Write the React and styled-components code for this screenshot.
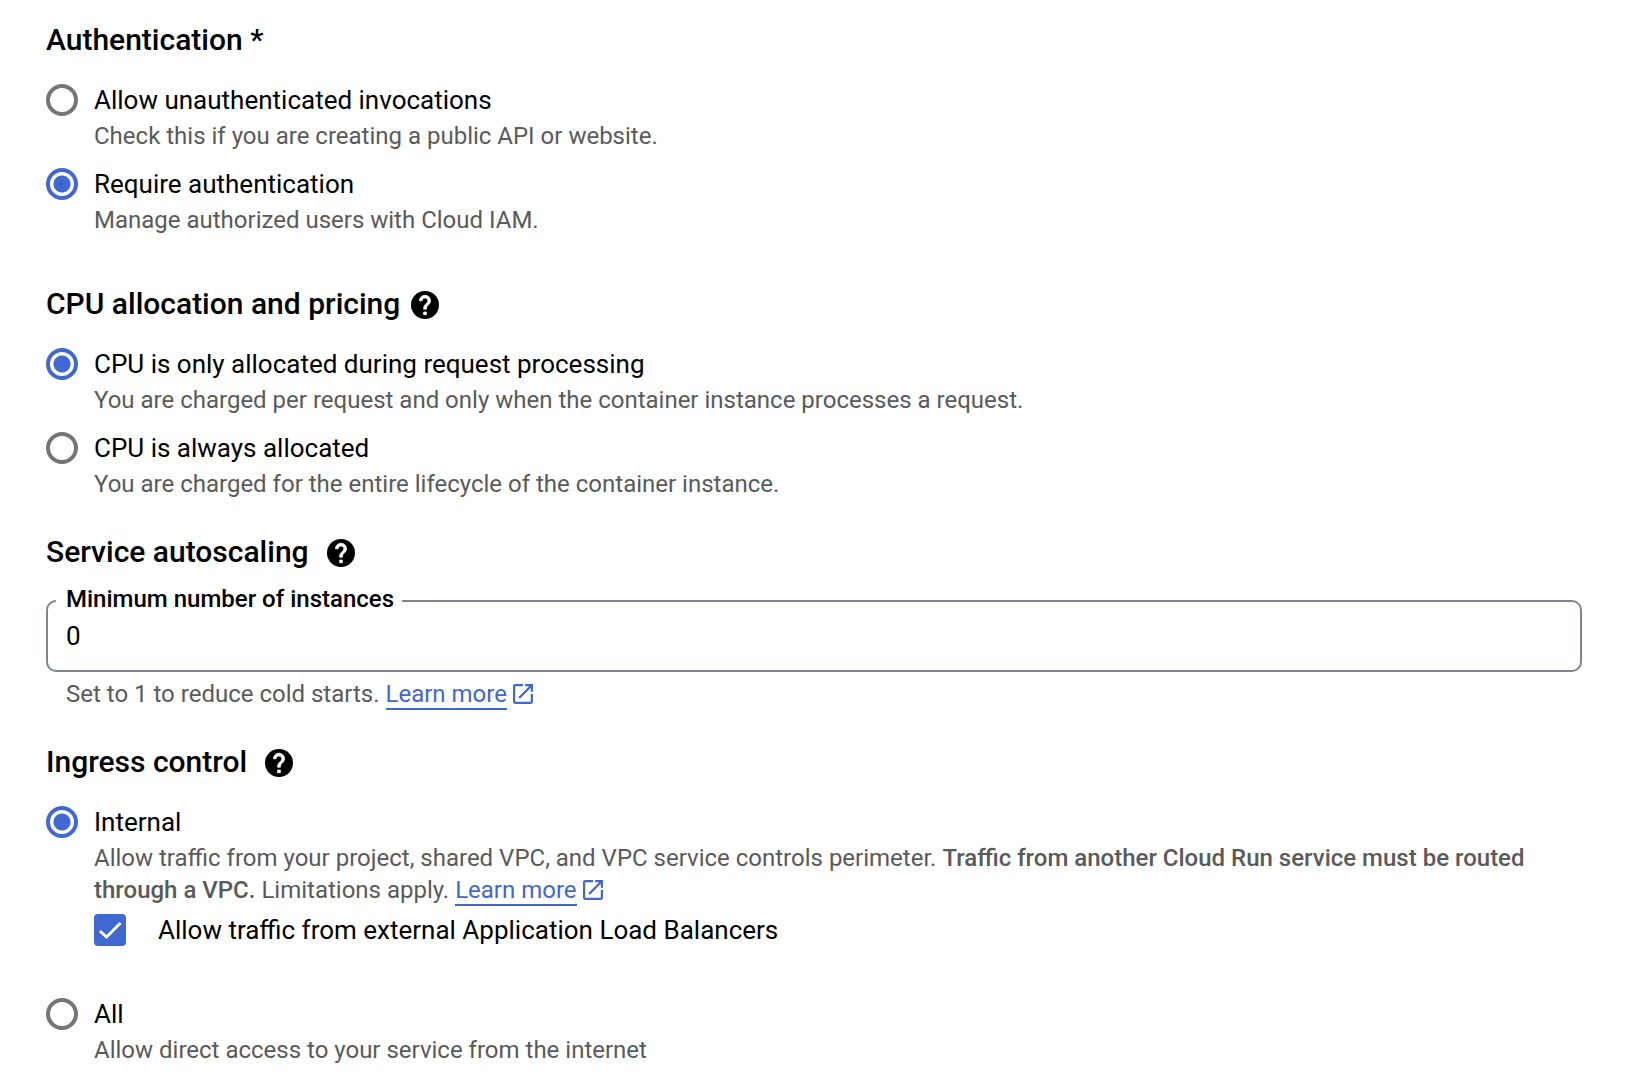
import React, { useState } from "react";
import styled, { createGlobalStyle } from "styled-components";

const blue = "#4167d2";
const ink = "#000000";
const muted = "#5a5a5a";
const outline = "#80868b";

const GlobalStyle = createGlobalStyle`
  *, *::before, *::after { box-sizing: border-box; }
  body {
    margin: 0;
    background: #ffffff;
    color: ${ink};
    font-family: Roboto, "Liberation Sans", sans-serif;
    font-size: 24px;
    line-height: 32px;
  }
`;

const Form = styled.form`
  display: flex;
  flex-direction: column;
  padding: 20px 68px 20px 46px;
`;

const Section = styled.section`
  display: flex;
  flex-direction: column;
  gap: ${(p) => p.$gap || 24}px;
  margin-bottom: ${(p) => p.$after || 0}px;
`;

const HeadingRow = styled.div`
  display: flex;
  align-items: center;
  gap: ${(p) => p.$gap || 18}px;
`;

const Heading = styled.h2`
  margin: 0;
  font-size: 30px;
  font-weight: 500;
  line-height: 40px;
`;

const HelpButton = styled.button`
  display: flex;
  padding: 2px 0 0;
  border: 0;
  background: none;
  color: ${ink};
  cursor: pointer;
`;

const Options = styled.div`
  display: flex;
  flex-direction: column;
  gap: ${(p) => p.$gap || 16}px;
`;

const Option = styled.div`
  display: grid;
  grid-template-columns: 32px 1fr;
  column-gap: 16px;
  row-gap: 4px;
`;

const Radio = styled.input`
  appearance: none;
  width: 32px;
  height: 32px;
  margin: 0;
  border: 4px solid #757575;
  border-radius: 50%;
  background: #ffffff;
  cursor: pointer;

  &:checked {
    border-color: ${blue};
    background: radial-gradient(circle, ${blue} 8px, #ffffff 9px);
  }
`;

const OptionLabel = styled.label`
  font-size: 26px;
  cursor: pointer;
`;

const Description = styled.p`
  grid-column: 2;
  margin: 0;
  color: ${muted};

  strong { font-weight: 500; }
`;

const Nested = styled.div`
  grid-column: 2;
  display: flex;
  align-items: center;
  gap: 32px;
  padding-top: 4px;
`;

const Tick = styled.span`
  display: grid;
  flex: none;

  input, svg { grid-area: 1 / 1; }
  svg { pointer-events: none; }
`;

const Checkbox = styled.input`
  appearance: none;
  width: 32px;
  height: 32px;
  margin: 0;
  border: 4px solid #757575;
  border-radius: 4px;
  cursor: pointer;

  &:checked {
    border-color: ${blue};
    background: ${blue};
  }
`;

const Field = styled.fieldset`
  margin: 0;
  padding: 0 8px;
  min-width: 0;
  border: 2px solid ${outline};
  border-radius: 10px;
`;

const FieldLegend = styled.legend`
  padding: 0 8px 4px 10px;
  font-weight: 500;
  line-height: 24px;
`;

const NumberInput = styled.input`
  display: block;
  width: 100%;
  height: 55px;
  padding: 0 10px 13px;
  border: 0;
  outline: 0;
  background: transparent;
  color: ${ink};
  font: inherit;
  font-size: 26px;
`;

const FieldBlock = styled.div`
  display: flex;
  flex-direction: column;
  gap: 6px;
`;

const Hint = styled(Description)`
  padding: 0 20px;
`;

const Link = styled.a`
  border-bottom: 2px solid ${blue};
  color: ${blue};
  text-decoration: none;
`;

const ExternalSvg = styled.svg`
  margin-left: 6px;
  vertical-align: -2px;
  fill: ${blue};
`;

function Help({ topic }) {
  return (
    <HelpButton type="button" aria-label={`Help: ${topic}`}>
      <svg width="28" height="28" viewBox="2 2 20 20" aria-hidden="true">
        <circle cx="12" cy="12" r="10" fill="currentColor" />
        <path
          fill="#ffffff"
          stroke="#ffffff"
          strokeWidth="0.5"
          d="M13 19h-2v-2h2v2zM15.07 11.25l-.9.92C13.45 12.9 13 13.5 13 15h-2v-.5c0-1.1.45-2.1 1.17-2.83l1.24-1.26c.37-.36.59-.86.59-1.41 0-1.1-.9-2-2-2s-2 .9-2 2H8c0-2.21 1.79-4 4-4s4 1.79 4 4c0 .88-.36 1.68-.93 2.25z"
        />
      </svg>
    </HelpButton>
  );
}

function LearnMore() {
  return (
    <>
      <Link href="#learn-more">Learn more</Link>
      <ExternalSvg width="20" height="20" viewBox="3 3 18 18" aria-hidden="true">
        <path d="M19 19H5V5h7V3H5c-1.11 0-2 .9-2 2v14c0 1.1.89 2 2 2h14c1.1 0 2-.9 2-2v-7h-2v7zM14 3v2h3.59l-9.83 9.83 1.41 1.41L19 6.41V10h2V3h-7z" />
      </ExternalSvg>
    </>
  );
}

function RadioOption({ group, value, current, onPick, label, description, children }) {
  const id = `${group}-${value}`;
  return (
    <Option>
      <Radio
        type="radio"
        id={id}
        name={group}
        value={value}
        checked={current === value}
        onChange={() => onPick(value)}
      />
      <OptionLabel htmlFor={id}>{label}</OptionLabel>
      <Description>{description}</Description>
      {children}
    </Option>
  );
}

export default function App() {
  const [auth, setAuth] = useState("require");
  const [cpu, setCpu] = useState("request");
  const [ingress, setIngress] = useState("internal");
  const [balancers, setBalancers] = useState(true);
  const [instances, setInstances] = useState("0");

  return (
    <>
      <GlobalStyle />
      <Form>
        <Section $after={48}>
          <Heading>Authentication *</Heading>
          <Options>
            <RadioOption
              group="auth" value="allow" current={auth} onPick={setAuth}
              label="Allow unauthenticated invocations"
              description="Check this if you are creating a public API or website."
            />
            <RadioOption
              group="auth" value="require" current={auth} onPick={setAuth}
              label="Require authentication"
              description="Manage authorized users with Cloud IAM."
            />
          </Options>
        </Section>

        <Section $after={32}>
          <HeadingRow $gap={11}>
            <Heading>CPU allocation and pricing</Heading>
            <Help topic="CPU allocation and pricing" />
          </HeadingRow>
          <Options>
            <RadioOption
              group="cpu" value="request" current={cpu} onPick={setCpu}
              label="CPU is only allocated during request processing"
              description="You are charged per request and only when the container instance processes a request."
            />
            <RadioOption
              group="cpu" value="always" current={cpu} onPick={setCpu}
              label="CPU is always allocated"
              description="You are charged for the entire lifecycle of the container instance."
            />
          </Options>
        </Section>

        <Section $gap={15} $after={32}>
          <HeadingRow>
            <Heading>Service autoscaling</Heading>
            <Help topic="Service autoscaling" />
          </HeadingRow>
          <FieldBlock>
            <Field>
              <FieldLegend>
                <label htmlFor="min-instances">Minimum number of instances</label>
              </FieldLegend>
              <NumberInput
                id="min-instances"
                inputMode="numeric"
                value={instances}
                onChange={(e) => setInstances(e.target.value)}
              />
            </Field>
            <Hint>
              Set to 1 to reduce cold starts. <LearnMore />
            </Hint>
          </FieldBlock>
        </Section>

        <Section>
          <HeadingRow>
            <Heading>Ingress control</Heading>
            <Help topic="Ingress control" />
          </HeadingRow>
          <Options $gap={52}>
            <RadioOption
              group="ingress" value="internal" current={ingress} onPick={setIngress}
              label="Internal"
              description={
                <>
                  Allow traffic from your project, shared VPC, and VPC service controls perimeter.{" "}
                  <strong>Traffic from another Cloud Run service must be routed through a VPC.</strong>{" "}
                  Limitations apply. <LearnMore />
                </>
              }
            >
              <Nested>
                <Tick>
                  <Checkbox
                    type="checkbox"
                    id="balancers"
                    checked={balancers}
                    onChange={(e) => setBalancers(e.target.checked)}
                  />
                  {balancers && (
                    <svg width="32" height="32" viewBox="0 0 32 32" fill="none" stroke="#ffffff" strokeWidth="3" aria-hidden="true">
                      <path d="M6 17l6.5 6L26.5 9" />
                    </svg>
                  )}
                </Tick>
                <OptionLabel htmlFor="balancers">
                  Allow traffic from external Application Load Balancers
                </OptionLabel>
              </Nested>
            </RadioOption>
            <RadioOption
              group="ingress" value="all" current={ingress} onPick={setIngress}
              label="All"
              description="Allow direct access to your service from the internet"
            />
          </Options>
        </Section>
      </Form>
    </>
  );
}
